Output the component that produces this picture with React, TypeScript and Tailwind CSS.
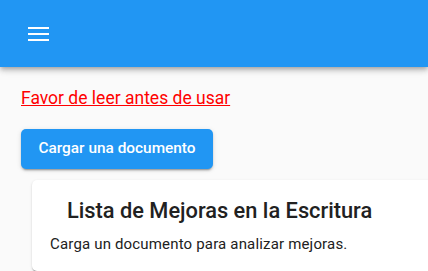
import React from "react";

export default function App() {
  return (
    <div className="w-[428px] h-[271px] overflow-hidden bg-[#fafafa]" style={{ fontFamily: "Roboto, 'Noto Sans', sans-serif" }}>
      <header className="relative z-10 h-[67px] bg-[#2196f3] shadow-[0_2px_4px_-1px_rgba(0,0,0,0.2),0_4px_5px_0_rgba(0,0,0,0.14),0_1px_10px_0_rgba(0,0,0,0.12)] flex items-center pl-[28px]">
        <div className="flex flex-col gap-[4px] w-[21px]">
          <span className="block h-[2px] bg-white" />
          <span className="block h-[2px] bg-white" />
          <span className="block h-[2px] bg-white" />
        </div>
      </header>
      <div className="pl-[21px] pt-[19px]">
        <a href="#" className="text-[17.5px] leading-[24px] text-[#ff0000] underline">Favor de leer antes de usar</a>
        <div className="mt-[18px]">
          <button className="w-[192px] h-[40px] rounded-[5px] bg-[#2196f3] text-white text-[15.4px] font-medium shadow-[0_3px_1px_-2px_rgba(0,0,0,0.2),0_2px_2px_0_rgba(0,0,0,0.14),0_1px_5px_0_rgba(0,0,0,0.12)]">
            Cargar una documento
          </button>
        </div>
        <div className="ml-[11px] mt-[11px] w-[460px] h-[91px] bg-white rounded-[5px] shadow-[0_2px_1px_-1px_rgba(0,0,0,0.2),0_1px_1px_0_rgba(0,0,0,0.14),0_1px_3px_0_rgba(0,0,0,0.12)] pt-[17px] pl-[18px]">
          <h2 className="pl-[17px] text-[21.8px] leading-[28px] font-medium text-[#212121]">Lista de Mejoras en la Escritura</h2>
          <p className="mt-[9px] text-[15px] tracking-[0.17px] leading-[20px] text-[#212121]">Carga un documento para analizar mejoras.</p>
        </div>
      </div>
    </div>
  );
}
